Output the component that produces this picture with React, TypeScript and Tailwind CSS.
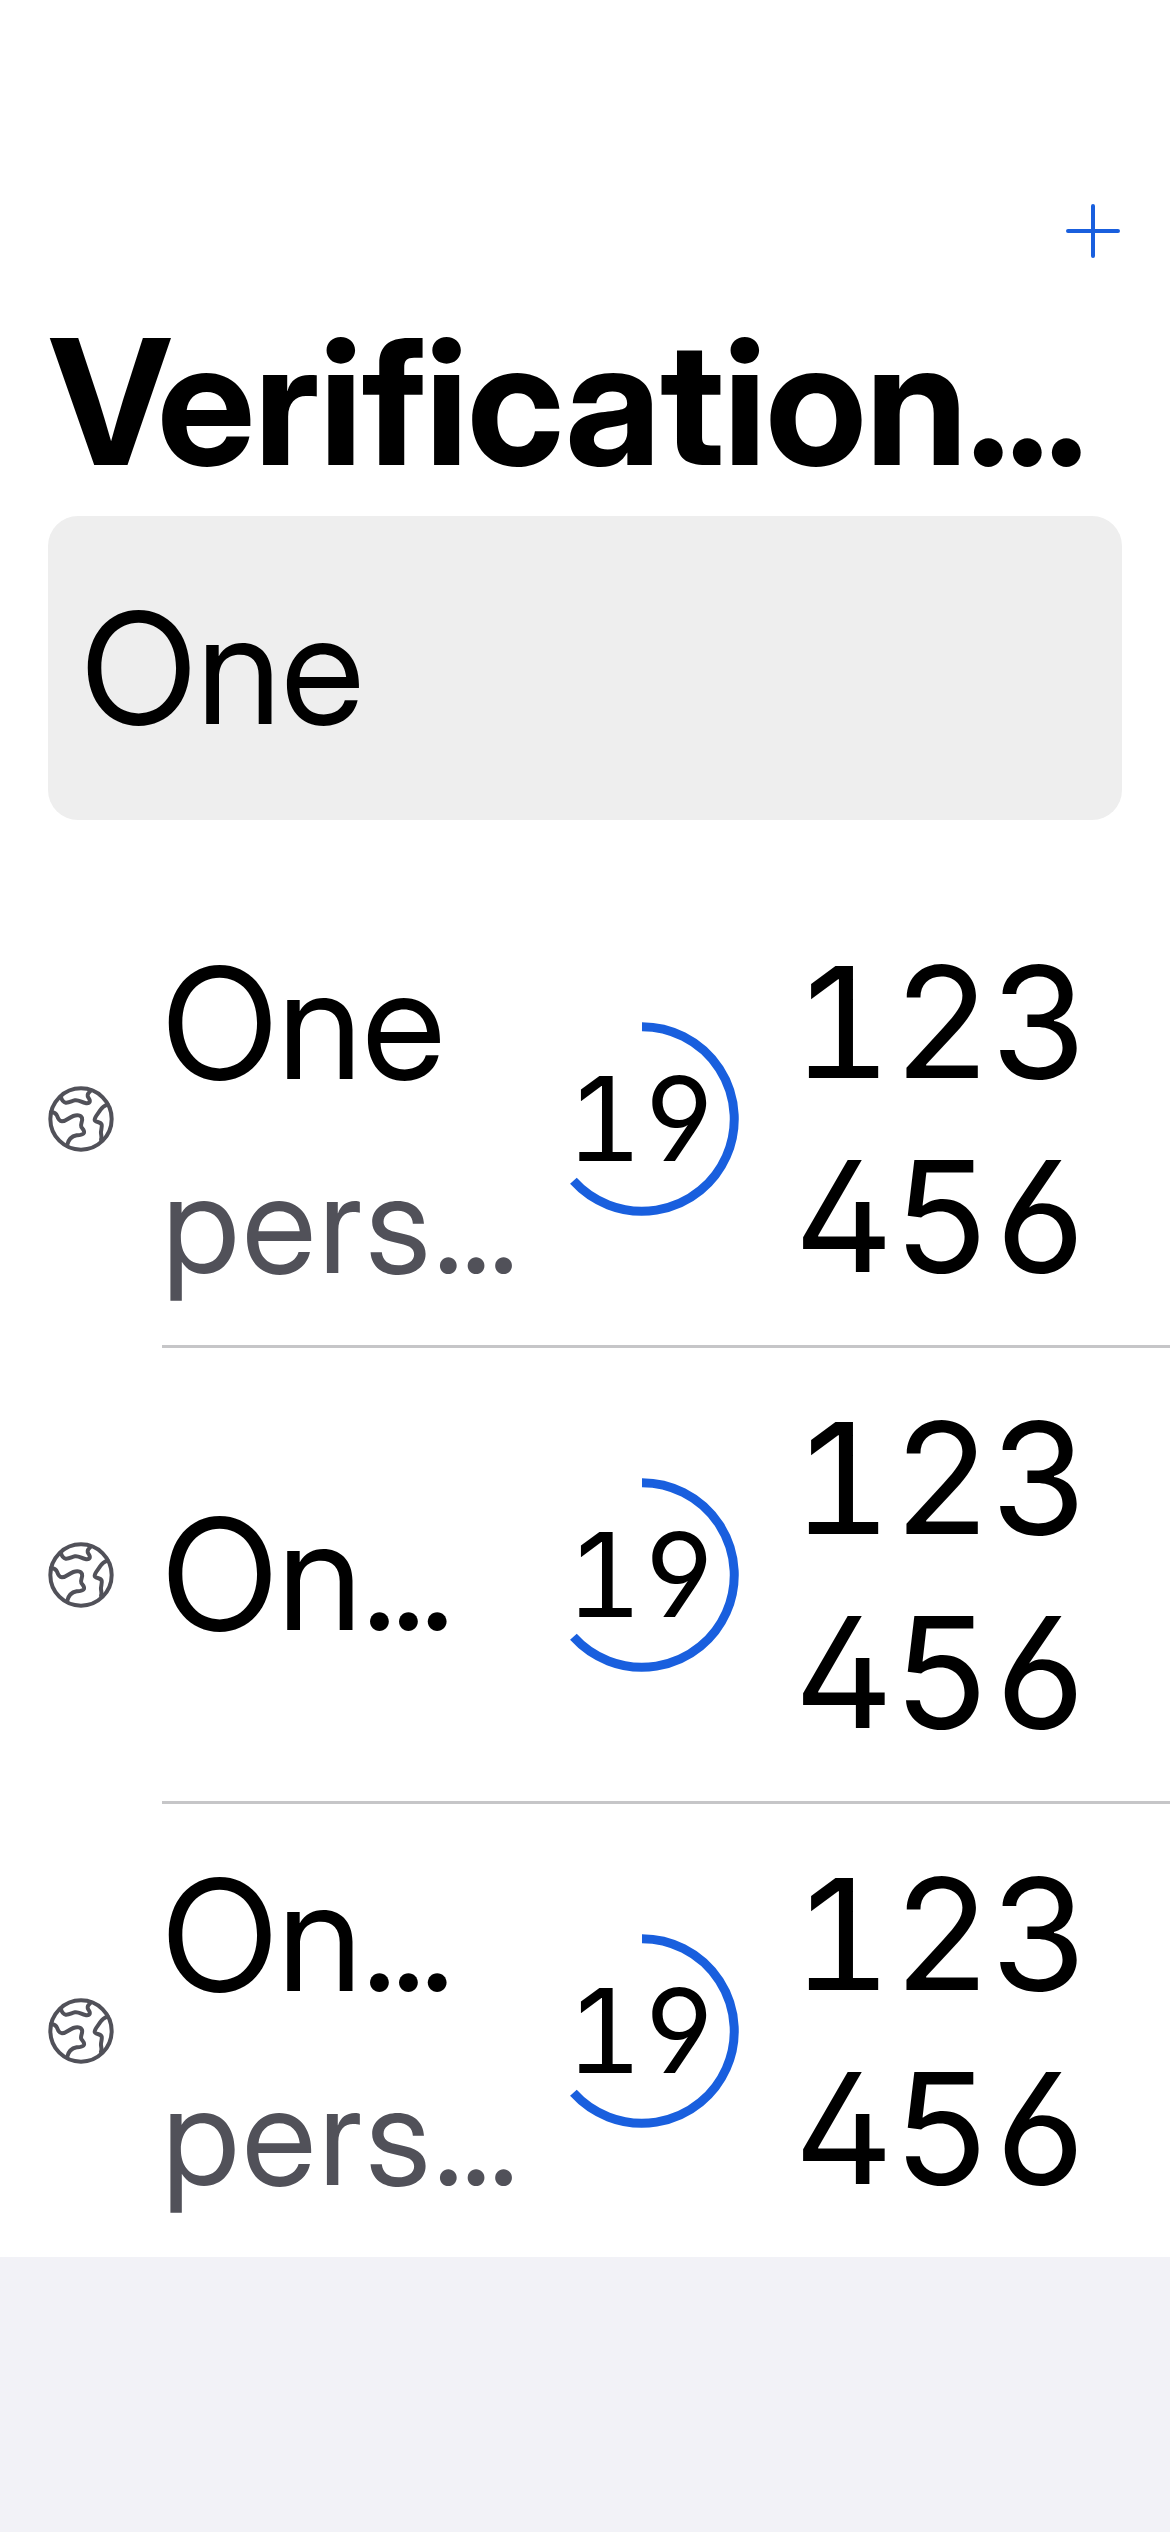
import React from "react";

function Globe() {
  return (
    <svg viewBox="51 45 204 204" className="-ml-px h-[68px] w-[68px] shrink-0" fill="none" stroke="#515159" strokeWidth="12" strokeLinecap="round" strokeLinejoin="round">
      <circle cx="153" cy="147" r="92" />
      <path d="M92 79C95 90 99 97 107 98C118 99 125 93 135 91C146 89 155 97 166 99C175 101 181 98 179 90C177 83 172 82 173 75C174 69 179 66 183 61" />
      <path d="M63 126C73 127 78 129 81 137C84 146 87 153 96 154C108 154 116 143 130 138C141 134 153 135 156 144C159 153 150 162 154 171C158 177 164 181 162 188C159 195 150 195 140 196C124 199 115 208 111 226" />
      <path d="M233 103C222 107 216 112 211 120C205 130 194 141 194 149C194 158 212 154 215 164C217 171 212 182 213 190C214 199 216 201 213 209" />
    </svg>
  );
}

function Digits({ value }: { value: string }) {
  return (
    <div className="flex">
      {value.split("").map((d, i) => (
        <span key={i} className={d === "1" ? "w-[98.3px] [text-indent:-2px]" : "w-[98.3px] text-center"}>{d}</span>
      ))}
    </div>
  );
}

function Timer() {
  return (
    <div className="relative h-[194px] w-[194px] shrink-0">
      <svg viewBox="-97 -97 194 194" className="absolute inset-0" fill="none" stroke="#195fde" strokeWidth="9">
        <path d="M0 -92.3A92.3 92.3 0 1 1 -68.6 61.8" />
      </svg>
      <div className="flex pl-[24.5px] font-['Inter'] text-[116.5px] leading-[194px] [font-feature-settings:'tnum','cv02','cv03','cv04']">
        <span className="w-[72px] [text-indent:-3px]">1</span>
        <span className="w-[72px] text-center">9</span>
      </div>
    </div>
  );
}

const rows = [
  { name: "One", cut: false, sub: "pers" },
  { name: "On", cut: true, sub: "" },
  { name: "On", cut: true, sub: "pers" },
];

export default function App() {
  return (
    <div className="flex h-[2532px] w-[1170px] flex-col overflow-hidden bg-[#f2f2f7] font-['Inter_Display','Inter',sans-serif] text-black">
      <header className="flex h-[892px] shrink-0 flex-col bg-white px-12">
        <div className="flex h-[258px] items-end justify-end pr-[2px]">
          <svg viewBox="0 0 54 54" className="h-[54px] w-[54px]" stroke="#195fde" strokeWidth="4" strokeLinecap="round">
            <path d="M27 2V52M2 27H52" />
          </svg>
        </div>
        <h1 className="h-[258px] whitespace-nowrap pl-px text-[174px] font-bold leading-[287px] tracking-[-0.7px]">
          Verification<span className="tracking-[-3.5px]">...</span>
        </h1>
        <div className="h-[304px] rounded-[30px] bg-[#eeeeee] pl-[33px] text-[154px] leading-[304px] tracking-[0.5px]">One</div>
      </header>
      {rows.map((r, i) => (
        <div key={i} className={i < 2 ? "flex h-[456px] shrink-0 bg-white pl-12" : "flex h-[453px] shrink-0 bg-white pl-12"}>
          <div className={i < 2 ? "flex w-[114px] items-center pb-[3px]" : "flex w-[114px] items-center"}>
            <Globe />
          </div>
          <div className={i < 2 ? "flex flex-1 items-center border-b-3 border-[#c6c6c8]" : "flex flex-1 items-center"}>
            <div className="w-[383px] shrink-0 whitespace-nowrap">
              <div className="text-[154px] leading-[209px] tracking-[0.5px]">
                {r.name}
                {r.cut && <span className="tracking-[-5px]">...</span>}
              </div>
              {r.sub && (
                <div className="text-[137px] leading-[190px] tracking-[2.8px] text-[#515159]">
                  {r.sub}
                  <span className="tracking-[-2.5px]">...</span>
                </div>
              )}
            </div>
            <Timer />
            <div className="ml-[55px] font-['Inter'] text-[154px] leading-[194px] [font-feature-settings:'tnum','cv02','cv03','cv04']">
              <Digits value="123" />
              <Digits value="456" />
            </div>
          </div>
        </div>
      ))}
    </div>
  );
}
